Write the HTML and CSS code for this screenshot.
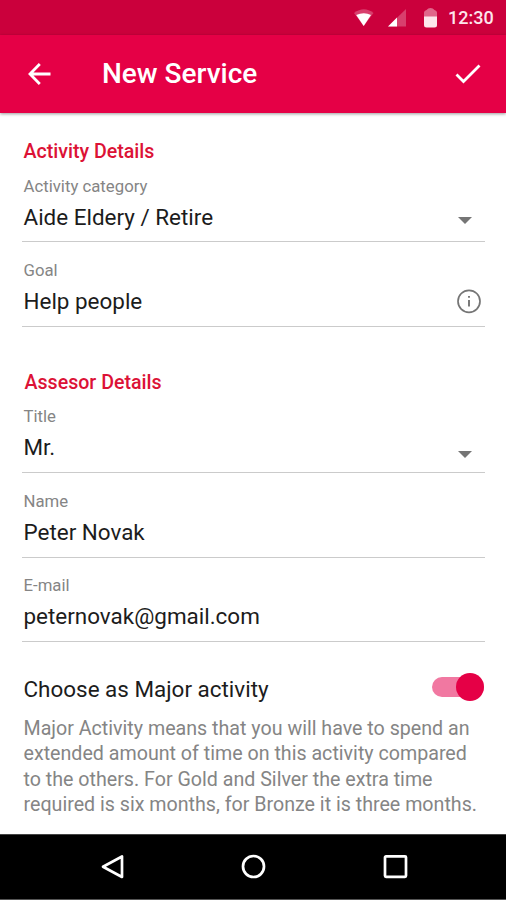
FILE: index.html
```html
<!DOCTYPE html>
<html lang="en">
<head>
<meta charset="utf-8">
<title>New Service</title>
<link rel="stylesheet" href="styles.css">
</head>
<body>
<div class="screen">
  <div class="status">
    <svg class="wifi" width="20" height="18" viewBox="0 0 20 18"><path d="M0 4Q10-3.500 19.500 4L9.700 17z" fill="#d83f6d"/><path d="M2.200 6Q10 2.500 17 6L9.700 17z" fill="#fff"/></svg>
    <svg class="signal" width="18" height="18" viewBox="0 0 18 18"><path d="M18 0V17.500H0z" fill="#d83f6d"/><path d="M9 8.500V17.500H0z" fill="#fff"/></svg>
    <svg class="battery" width="13" height="20" viewBox="0 0 13 20"><path d="M0 10V4.500Q0 2.500 2.500 2Q4 0 6.500 0Q9 0 10.500 2Q13 2.500 13 4.500V10z" fill="#e0668a"/><path d="M0 8.500H13V17Q13 19.500 10.500 19.500H2.500Q0 19.500 0 17z" fill="#fde6ec"/></svg>
    <span class="clock">12:30</span>
  </div>
  <header class="bar">
    <svg class="back" width="24" height="24" viewBox="0 0 24 24"><path d="M23.500 12H3M12.800 2L3 12L12.800 22" fill="none" stroke="#fff" stroke-width="2.800"/></svg>
    <h1 class="title">New Service</h1>
    <svg class="check" width="26" height="20" viewBox="0 0 26 20"><path d="M1.500 10.500L8.500 17.500L24.500 1.500" fill="none" stroke="#fff" stroke-width="2.800"/></svg>
  </header>
  <main class="form">
    <h2 class="heading">Activity Details</h2>
    <div class="field">
      <div class="label">Activity category</div>
      <div class="value"><span>Aide Eldery / Retire</span><i class="caret"></i></div>
    </div>
    <div class="field">
      <div class="label">Goal</div>
      <div class="value"><span>Help people</span>
        <svg class="info" width="26" height="26" viewBox="0 0 26 26"><circle cx="13" cy="13.300" r="11" fill="none" stroke="#757575" stroke-width="1.700"/><path d="M13 12V18.500M13 8V9.800" stroke="#757575" stroke-width="1.900"/></svg>
      </div>
    </div>
    <h2 class="heading second">Assesor Details</h2>
    <div class="field">
      <div class="label">Title</div>
      <div class="value"><span>Mr.</span><i class="caret low"></i></div>
    </div>
    <div class="field">
      <div class="label">Name</div>
      <div class="value"><span>Peter Novak</span></div>
    </div>
    <div class="field">
      <div class="label">E-mail</div>
      <div class="value"><span>peternovak@gmail.com</span></div>
    </div>
    <div class="major">
      <span>Choose as Major activity</span>
      <div class="switch"><i class="knob"></i></div>
    </div>
    <p class="note">Major Activity means that you will have to spend an<br>extended amount of time on this activity compared<br>to the others. For Gold and Silver the extra time<br>required is six months, for Bronze it is three months.</p>
  </main>
  <nav class="nav">
    <svg width="26" height="28" viewBox="0 0 26 28"><path d="M22 3.500V24L3 13.700z" fill="none" stroke="#fff" stroke-width="2.700" stroke-linejoin="round"/></svg>
    <svg width="26" height="28" viewBox="0 0 26 28"><circle cx="12.500" cy="13.500" r="10.500" fill="none" stroke="#fff" stroke-width="2.700"/></svg>
    <svg width="26" height="28" viewBox="0 0 26 28"><rect x="3" y="3.300" width="21" height="20.500" rx="1" fill="none" stroke="#fff" stroke-width="2.700"/></svg>
  </nav>
</div>
</body>
</html>
```
FILE: styles.css
```css
* { box-sizing: border-box; }
body { margin: 0; font-family: Roboto, "Liberation Sans", sans-serif; }
.screen { width: 506px; height: 900px; display: flex; flex-direction: column; background: #fff; overflow: hidden; }
.status { height: 35px; flex: none; background: #cb003c; display: flex; align-items: center; padding-left: 354px; color: #fde6ec; }
.signal { margin-left: 14px; }
.battery { margin-left: 18px; }
.clock { margin-left: 11px; font-size: 18px; font-weight: 500; white-space: nowrap; }
.bar { height: 78px; flex: none; background: #e50046; display: flex; align-items: center; padding: 0 25px 0 27px; box-shadow: 0 1px 3px #0006; }
.title { margin: 0 auto 0 51px; color: #fff; font-size: 28px; line-height: 36px; font-weight: 500; white-space: nowrap; }
.form { height: 721px; flex: none; padding: 26px 21px 0 22px; }
.heading { margin: 0; padding-left: 1.500px; height: 25px; line-height: 25px; font-size: 19.600px; font-weight: 500; color: #dc1236; white-space: nowrap; }
.second { margin-top: 43px; padding-left: 2.500px; }
.field { height: 78.400px; border-bottom: 1px solid #cbcbcb; padding: 11.600px 0 0 1.500px; margin-bottom: 6px; }
.label { height: 20px; line-height: 20px; font-size: 16.750px; color: #858585; white-space: nowrap; }
.value { height: 42px; line-height: 42px; font-size: 22.450px; color: #1c1c1c; display: flex; align-items: center; justify-content: space-between; white-space: nowrap; }
.caret { width: 0; height: 0; border: 7px solid transparent; border-top-color: #757575; border-bottom: 0; margin: 8px 13.500px 0 0; }
.low { margin-top: 14px; }
.info { margin-right: 3px; }
.major { display: flex; align-items: center; justify-content: space-between; margin-top: 27px; padding: 0 1px 0 1.500px; height: 40px; font-size: 22.450px; color: #1c1c1c; white-space: nowrap; }
.switch { width: 52px; height: 28px; margin-top: -3px; display: flex; align-items: center; position: relative; }
.switch::before { content: ""; width: 100%; height: 20px; border-radius: 10px; background: #f178a1; }
.knob { position: absolute; right: 0; width: 28px; height: 28px; border-radius: 50%; background: #e50046; }
.note { margin: 7px 0 0; padding-left: 1.500px; font-size: 19.650px; line-height: 25.300px; color: #858585; white-space: nowrap; }
.nav { height: 66px; flex: none; background: #000; border-top: 1px solid #444; border-bottom: 1px solid #555; display: flex; align-items: center; justify-content: space-between; padding: 0 98px 0 100px; }
```
